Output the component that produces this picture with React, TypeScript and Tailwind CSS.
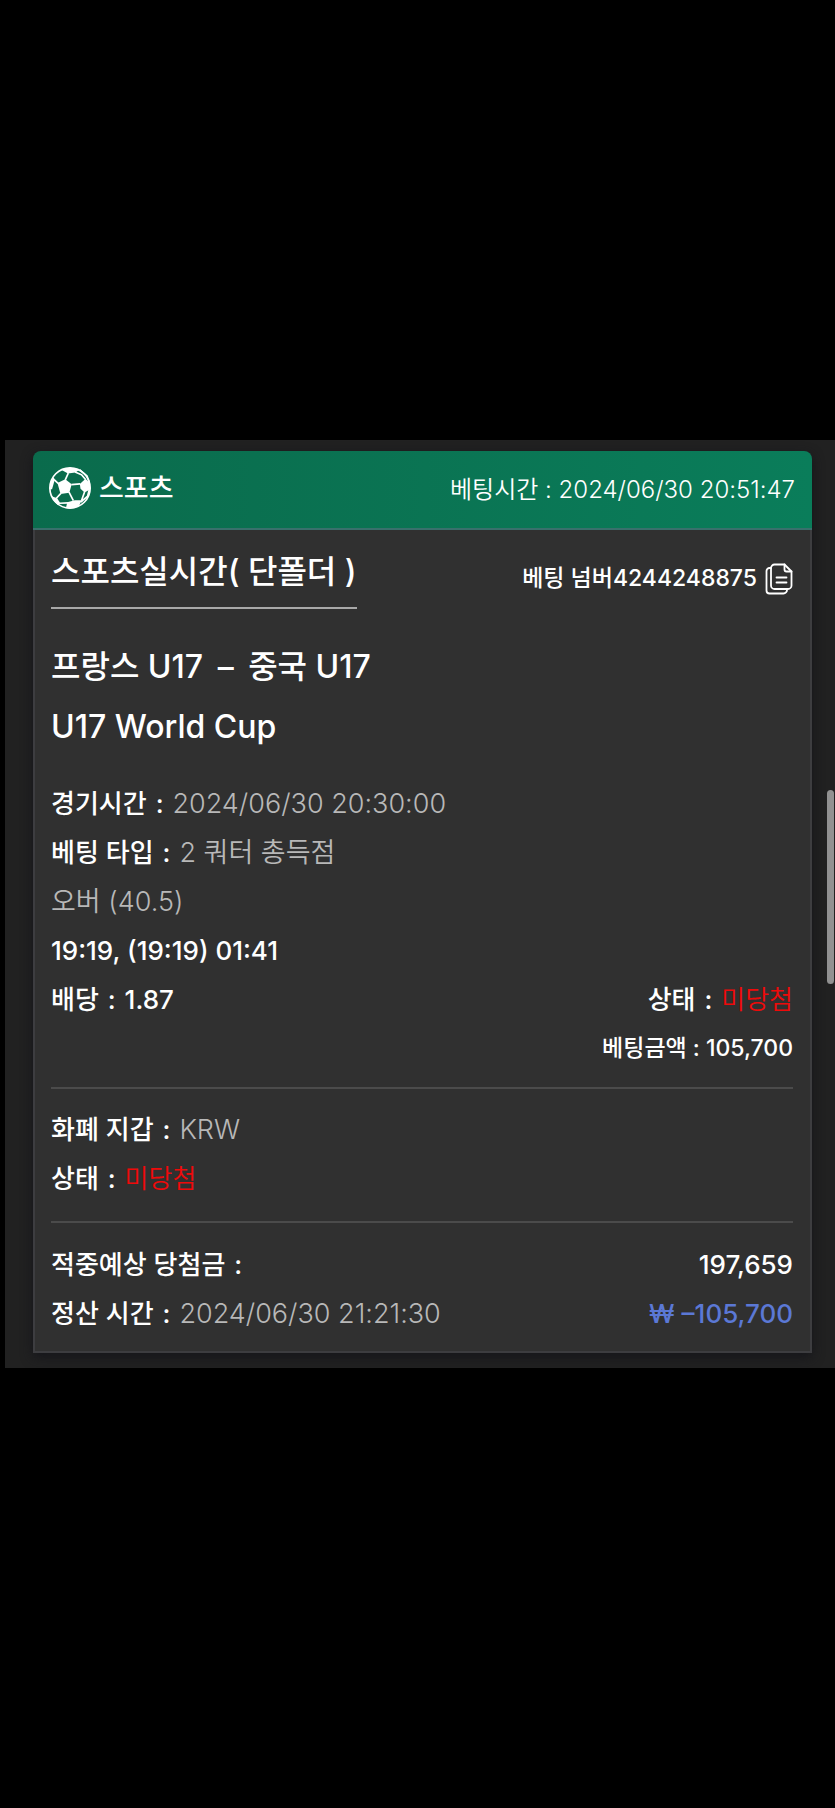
import type { ReactNode } from "react";

function SoccerBall() {
  return (
    <svg viewBox="0 0 124 124" className="mb-1 size-[42px] shrink-0" aria-hidden="true">
      <circle cx="62" cy="62" r="59.500" fill="none" stroke="#fff" strokeWidth="5" />
      <g fill="#fff">
        <path d="M25 47 48 36 67 51 60 76 34 80Z" />
        <path d="M91 50 108 35 121 48 122 66 105 75 93 64Z" />
        <path d="M36 8Q62 -4 90 8L78 16 56 19Z" />
        <path d="M54 104 76 98 97 98 88 116Q70 126 50 121Z" />
        <path d="M4 44 14 30 17 38 9 66 3 66Z" />
        <path d="M8 86 24 92 34 108 26 112Q13 102 8 86Z" />
      </g>
      <path
        d="M48 38 57 18M66 52 92 50M59 74 72 99M35 78 21 93M27 48 15 37M77 15 96 23 108 37M105 74 96 99M32 107 56 106M90 8 112 26 119 46M119 66 114 86 94 104"
        fill="none"
        stroke="#fff"
        strokeWidth="5"
        strokeLinejoin="round"
      />
    </svg>
  );
}

function CopyIcon() {
  return (
    <svg
      viewBox="0 0 28 32"
      className="h-8 w-7"
      fill="none"
      stroke="#fff"
      strokeWidth="1.800"
      strokeLinejoin="round"
      strokeLinecap="round"
      aria-hidden="true"
    >
      <path d="M9.500 1.500H19.500L26.500 8.500V22.500A3.500 3.500 0 0 1 23 26H9.500A3.500 3.500 0 0 1 6 22.500V5A3.500 3.500 0 0 1 9.500 1.500Z" />
      <path d="M19.500 1.500V6.500A2 2 0 0 0 21.500 8.500H26.500" />
      <path d="M6 5H4.500A3 3 0 0 0 1.500 8V27.500A3 3 0 0 0 4.500 30.500H18.500A3.500 3.500 0 0 0 22 27V26" />
      <path d="M11.500 14.500H21.500M11.500 19.500H21.500" />
    </svg>
  );
}

function Row({ label, children }: { label: string; children?: ReactNode }) {
  return (
    <p>
      {label} <span className="mx-0.5">:</span> {children}
    </p>
  );
}

function Value({ children }: { children: ReactNode }) {
  return <span className="text-[27px] font-[350] text-[#b8b8b8]">{children}</span>;
}

const Lost = () => <span className="font-[350] text-[#ee0a0a]">미당첨</span>;

export default function App() {
  return (
    <div className="flex min-h-screen flex-col justify-center bg-black font-['Inter','Noto_Sans_CJK_KR',sans-serif] text-white">
      <main className="relative ml-[5px] bg-[#212121] pt-[11px] pr-[23px] pb-[15px] pl-7">
        <article className="rounded-t-lg shadow-[0_4px_12px_#15151a]">
          <header className="flex h-[79px] items-center justify-between rounded-t-lg border-b-2 border-[#39706c] bg-linear-to-r from-[#0a6b4c] to-[#0a7d5a] pr-[17px] pl-4">
            <h1 className="flex items-center gap-2 text-[27px] font-medium">
              <SoccerBall />
              스포츠
            </h1>
            <time className="text-[24px] font-[350]">베팅시간 : 2024/06/30 20:51:47</time>
          </header>

          <div className="border-2 border-t-0 border-[#3d3d40] bg-[#303030] pr-[17px] pb-[13px] pl-4 text-[26px] leading-[49px] font-medium">
            <div className="flex items-start justify-between">
              <h2 className="border-b-2 border-[#a8a8a8] pt-[17px] pb-[11px] text-[32px]">스포츠실시간( 단폴더 )</h2>
              <div className="flex items-center gap-2 pt-6 text-[23px]">
                베팅 넘버4244248875
                <button type="button" aria-label="복사">
                  <CopyIcon />
                </button>
              </div>
            </div>

            <div className="pt-7 text-[32px] leading-[60px]">
              <p>
                프랑스 U17 <span className="mx-1.5">–</span> 중국 U17
              </p>
              <p>U17 World Cup</p>
            </div>

            <section className="border-b-2 border-[#4b4b4b] pt-[22px] pb-3.5">
              <Row label="경기시간">
                <Value>2024/06/30 20:30:00</Value>
              </Row>
              <Row label="베팅 타입">
                <Value>2 쿼터 총득점</Value>
              </Row>
              <p>
                <Value>오버 (40.5)</Value>
              </p>
              <p>19:19, (19:19) 01:41</p>
              <div className="flex justify-between">
                <Row label="배당">1.87</Row>
                <Row label="상태">
                  <Lost />
                </Row>
              </div>
              <p className="text-right text-[23px]">베팅금액 : 105,700</p>
            </section>

            <section className="border-b-2 border-[#4b4b4b] pt-4 pb-[18px]">
              <Row label="화폐 지갑">
                <Value>KRW</Value>
              </Row>
              <Row label="상태">
                <Lost />
              </Row>
            </section>

            <section className="pt-[17px]">
              <div className="flex justify-between">
                <Row label="적중예상 당첨금" />
                <p>197,659</p>
              </div>
              <div className="flex justify-between">
                <Row label="정산 시간">
                  <Value>2024/06/30 21:21:30</Value>
                </Row>
                <p className="text-[#5b78d5]">₩ –105,700</p>
              </div>
            </section>
          </div>
        </article>

        <div className="absolute top-[350px] right-px h-[194px] w-[7px] rounded-full bg-[#919191]" />
      </main>
    </div>
  );
}
